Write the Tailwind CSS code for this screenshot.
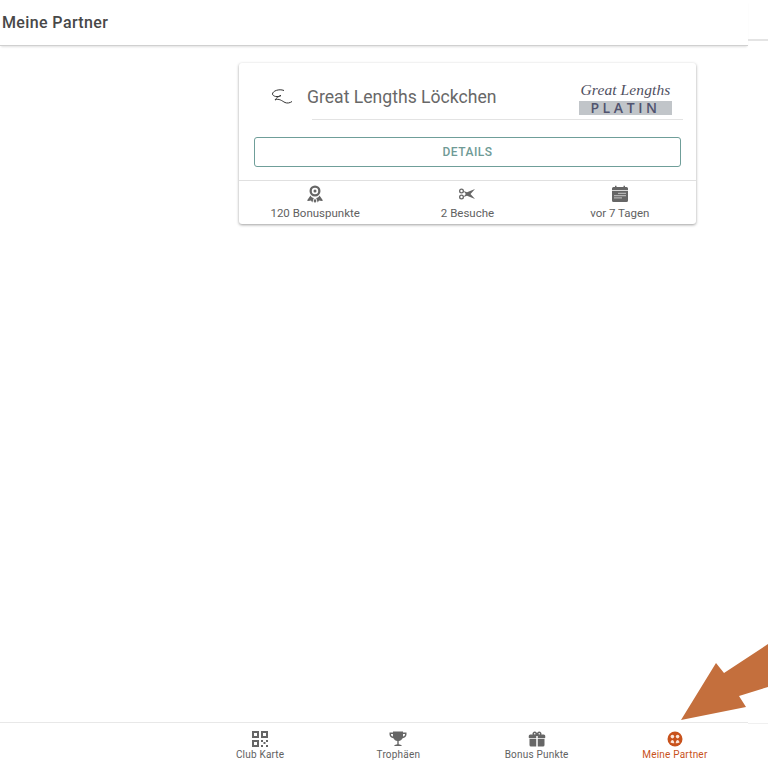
<!DOCTYPE html>
<html lang="de">
<head>
  <meta charset="UTF-8" />
  <title>Meine Partner</title>
  <script src="https://cdn.jsdelivr.net/npm/@tailwindcss/browser@4"></script>
</head>
<body class="bg-white font-['Roboto',sans-serif] text-[#616161]">
  <div class="relative flex flex-col w-[768px] h-[768px] overflow-hidden">

    <!-- side strip lines right of the main view -->
    <div class="absolute left-[748px] top-[39px] w-[20px] h-[2px] bg-[#e4e4e4]"></div>
    <div class="absolute left-[748px] top-[723px] w-[20px] h-px bg-[#f0f0f0]"></div>

    <!-- Header -->
    <header class="w-[748px] h-[46px] shrink-0 flex items-center pl-[2px] bg-white border-b border-[#d0d0d0] shadow-[0_2px_2px_-1px_rgba(0,0,0,0.12)]">
      <h1 class="text-[16px] font-medium tracking-[0.38px] text-[#484848]">Meine Partner</h1>
    </header>

    <!-- Content -->
    <main class="flex-1 pl-[239px] pt-[17px]">
      <div class="w-[457px] h-[161px] flex flex-col rounded-[3px] bg-white shadow-[0_1px_3px_rgba(0,0,0,0.38)]">
        <div class="relative h-[57px] shrink-0 flex items-start pl-[32px] pt-[24px]">
          <svg class="w-[22px] h-[18px] mt-[1px]" viewBox="0 0 22 18" fill="none" stroke="#333" stroke-width="1">
            <path d="M13 2.500C8 0.500 1.500 3 1.500 6C1.500 8.500 7 9.500 10 7.500C8 8 5 10 4 12C8 10 11 13 14 14.500C16 15.500 19 15 21 13.500" />
          </svg>
          <span class="ml-[14px] text-[17.6px] leading-[21px] text-[#686868]">Great Lengths Löckchen</span>
          <div class="absolute left-[340px] top-[17px] w-[93px] flex flex-col items-center">
            <span class="h-[21px] w-full text-center whitespace-nowrap font-['Liberation_Serif',serif] italic text-[15.5px] leading-[20px] tracking-[0.1px] text-[#50505f]">Great Lengths</span>
            <span class="w-full h-[14px] bg-[#c1c5c9] text-center font-['Open_Sans',sans-serif] font-semibold text-[14px] leading-[14px] tracking-[3.6px] text-[#50536f]">PLATIN</span>
          </div>
          <div class="absolute left-[73px] right-[13px] bottom-0 h-px bg-[#e3e3e3]"></div>
        </div>

        <div class="px-[15px] pt-[17px]">
          <button class="w-[427px] h-[30px] rounded-[3px] border border-[#6f9e99] text-[12px] font-medium tracking-[0.5px] text-[#6f9a96]">DETAILS</button>
        </div>

        <div class="mt-[13px] flex-1 grid grid-cols-3 border-t border-[#e0e0e0]">
          <div class="flex flex-col items-center pt-[4px]">
            <svg class="w-[18px] h-[18px]" viewBox="0 0 18 18" fill="#666">
              <path fill-rule="evenodd" d="M9 0.500A5.500 5.500 0 1 1 9 11.500A5.500 5.500 0 1 1 9 0.500ZM9 2.800A3.200 3.200 0 1 0 9 9.200A3.200 3.200 0 1 0 9 2.800ZM9 4.500A1.500 1.500 0 1 1 9 7.500A1.500 1.500 0 1 1 9 4.500Z" />
              <path d="M4.500 10.500C5 12 6.500 12.800 7.800 13L6.300 17.500L5 15.500L2.500 16L1 15.500ZM13.500 10.500C13 12 11.500 12.800 10.200 13L11.700 17.500L13 15.500L15.500 16L17 15.500ZM9 13.500L10.500 16L9 18L7.500 16Z" />
            </svg>
            <span class="mt-[1px] text-[11.5px] leading-[18px] text-[#616161]">120 Bonuspunkte</span>
          </div>
          <div class="flex flex-col items-center pt-[4px]">
            <svg class="w-[18px] h-[18px]" viewBox="0 0 18 18" fill="#666">
              <path fill-rule="evenodd" d="M3.500 3.500A2.500 2.500 0 1 1 3.500 8.500A2.500 2.500 0 1 1 3.500 3.500ZM3.500 4.800A1.200 1.200 0 1 0 3.500 7.200A1.200 1.200 0 1 0 3.500 4.800ZM3.500 9.500A2.500 2.500 0 1 1 3.500 14.500A2.500 2.500 0 1 1 3.500 9.500ZM3.500 10.800A1.200 1.200 0 1 0 3.500 13.200A1.200 1.200 0 1 0 3.500 10.800Z" />
              <path d="M5.500 6L9 7.200L17 4L12.500 9L17 14L9 10.800L5.500 12L7.800 9Z" />
            </svg>
            <span class="mt-[1px] text-[11.5px] leading-[18px] text-[#616161]">2 Besuche</span>
          </div>
          <div class="flex flex-col items-center pt-[4px]">
            <svg class="w-[18px] h-[18px]" viewBox="0 0 18 18" fill="#666">
              <path d="M2.500 2H4V0.800H5.500V2H12.500V0.800H14V2H15.500A1.500 1.500 0 0 1 17 3.500V5H1V3.500A1.500 1.500 0 0 1 2.500 2Z" />
              <path fill-rule="evenodd" d="M1 5.800H17V15.500A1.500 1.500 0 0 1 15.500 17H2.500A1.500 1.500 0 0 1 1 15.500ZM7.500 7.800V9H8.500V7.800ZM9.500 7.800V9H10.500V7.800ZM11.500 7.800V9H12.500V7.800ZM13.500 7.800V9H14.500V7.800ZM3.500 10V11.200H4.500V10ZM5.500 10V11.200H6.500V10ZM7.500 10V11.200H8.500V10ZM9.500 10V11.200H10.500V10ZM11.500 10V11.200H12.500V10ZM13.500 10V11.200H14.500V10ZM3.500 12.200V13.400H4.500V12.200ZM5.500 12.200V13.400H6.500V12.200ZM7.500 12.200V13.400H8.500V12.200ZM9.500 12.200V13.400H10.500V12.200Z" />
            </svg>
            <span class="mt-[1px] text-[11.5px] leading-[18px] text-[#616161]">vor 7 Tagen</span>
          </div>
        </div>
      </div>
    </main>

    <!-- Bottom navigation -->
    <nav class="w-[748px] h-[46px] shrink-0 pl-[191px] border-t border-[#e8e8e8] bg-white">
      <div class="w-[553px] grid grid-cols-4 pt-[5px]">
        <div class="flex flex-col items-center">
          <svg class="w-[22px] h-[22px]" viewBox="0 0 22 22" fill="#666">
            <path fill-rule="evenodd" d="M3 3H10V10H3ZM5 5V8H8V5ZM12 3H19V10H12ZM14 5V8H17V5ZM3 12H10V19H3ZM5 14V17H8V14Z" />
            <path d="M12 12H14V14H12ZM14.500 14H16.500V16H14.500ZM17 12H19V14H17ZM12 17H14V19H12ZM17 17H19V19H17Z" />
          </svg>
          <span class="-mt-[1px] text-[10px] leading-[12px] tracking-[0.2px] text-[#616161]">Club Karte</span>
        </div>
        <div class="flex flex-col items-center">
          <svg class="w-[22px] h-[22px]" viewBox="0 0 22 22" fill="#666">
            <path fill-rule="evenodd" d="M6 3.500H16V4.500H19.500V6.500C19.500 8.500 17.800 9.800 15.600 10.200C14.800 11.800 13.300 12.800 11.700 13V16.300C13 16.500 14.300 17 15 18H7C7.700 17 9 16.500 10.300 16.300V13C8.700 12.800 7.200 11.800 6.400 10.200C4.200 9.800 2.500 8.500 2.500 6.500V4.500H6ZM4 6V6.500C4 7.500 4.800 8.300 5.900 8.600C5.900 8 6 7 6 6ZM18 6H16C16 7 16.100 8 16.100 8.600C17.200 8.300 18 7.500 18 6.500Z" />
          </svg>
          <span class="-mt-[1px] text-[10px] leading-[12px] tracking-[0.2px] text-[#616161]">Trophäen</span>
        </div>
        <div class="flex flex-col items-center">
          <svg class="w-[18px] h-[18px] my-[2px]" viewBox="0 0 24 24" fill="#666"><path d="M9.06,1.93C7.17,1.92 5.33,3.74 6.17,6H3A2,2 0 0,0 1,8V10A1,1 0 0,0 2,11H11V8H13V11H22A1,1 0 0,0 23,10V8A2,2 0 0,0 21,6H17.83C19,2.73 14.6,0.42 12.57,3.24L12,4L11.43,3.22C10.8,2.33 9.93,1.94 9.06,1.93M9,4C9.89,4 10.34,5.08 9.71,5.71C9.08,6.34 8,5.89 8,5A1,1 0 0,1 9,4M15,4C15.89,4 16.34,5.08 15.71,5.71C15.08,6.34 14,5.89 14,5A1,1 0 0,1 15,4M2,12V20A2,2 0 0,0 4,22H11V12H2M13,12V22H20A2,2 0 0,0 22,20V12H13Z" /></svg>
          <span class="-mt-[1px] text-[10px] leading-[12px] tracking-[0.2px] text-[#616161]">Bonus Punkte</span>
        </div>
        <div class="flex flex-col items-center">
          <svg class="w-[22px] h-[22px]" viewBox="0 0 22 22">
            <circle cx="11" cy="11" r="7.500" fill="#c8521c" />
            <circle cx="8.400" cy="8.600" r="1.800" fill="#fbe6da" />
            <circle cx="13.600" cy="8.600" r="1.800" fill="#fbe6da" />
            <path d="M6.500 14.500C6.700 13 7.500 12 8.400 12C9.300 12 10.100 13 10.300 15.200C8.800 15.400 7.500 15.200 6.500 14.500ZM11.700 15.200C11.900 13 12.700 12 13.600 12C14.500 12 15.300 13 15.500 14.500C14.500 15.200 13.200 15.400 11.700 15.200Z" fill="#fbe6da" />
          </svg>
          <span class="-mt-[1px] text-[10px] leading-[12px] tracking-[0.2px] text-[#c8521c]">Meine Partner</span>
        </div>
      </div>
    </nav>

    <!-- Pointer arrow over the screenshot -->
    <svg class="absolute left-0 top-0 w-[768px] h-[768px] pointer-events-none" viewBox="0 0 768 768">
      <polygon points="681,720 716,663 724,673 768,644 768,687 739,696 746,707" fill="#c46f3d" />
    </svg>
  </div>
</body>
</html>
